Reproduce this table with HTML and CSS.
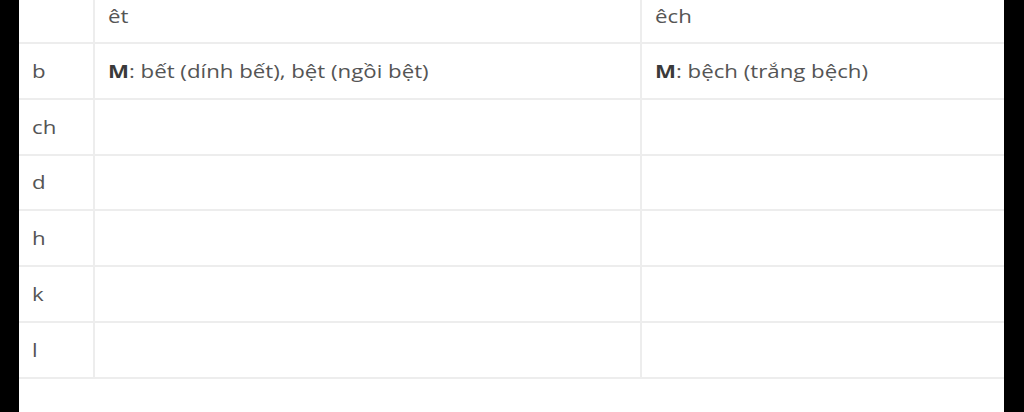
FILE: index.html
```html
<!DOCTYPE html>
<html lang="vi">
<head>
<meta charset="utf-8">
<link rel="stylesheet" href="styles.css">
</head>
<body>
<div class="sheet">
  <table class="grid">
    <colgroup><col class="c1"><col class="c2"><col class="c3"></colgroup>
    <tr class="head"><td></td><td><span class="tx">êt</span></td><td><span class="tx">êch</span></td></tr>
    <tr><td><span class="tx">b</span></td><td><span class="tx"><b>M</b>: bết (dính bết), bệt (ngồi bệt)</span></td><td><span class="tx"><b>M</b>: bệch (trắng bệch)</span></td></tr>
    <tr><td><span class="tx">ch</span></td><td></td><td></td></tr>
    <tr><td><span class="tx">d</span></td><td></td><td></td></tr>
    <tr><td><span class="tx">h</span></td><td></td><td></td></tr>
    <tr><td><span class="tx">k</span></td><td></td><td></td></tr>
    <tr><td><span class="tx">l</span></td><td></td><td></td></tr>
  </table>
</div>
</body>
</html>
```
FILE: styles.css
```css
html, body {
  margin: 0;
  padding: 0;
  background: #000;
}
.sheet {
  margin: 0 20px 0 19px;
  height: 412px;
  background: #fff;
  overflow: hidden;
}
.grid {
  width: 985px;
  border-collapse: collapse;
  table-layout: fixed;
  font-family: "Open Sans", "Noto Sans", sans-serif;
  font-size: 18px;
  color: #555;
}
.c1 { width: 75px; }
.c2 { width: 547px; }
.c3 { width: 363px; }
.grid td {
  padding: 14.9px 12px 14.9px 13px;
  line-height: 24px;
  border-bottom: 2px solid #ededed;
  border-left: 2px solid #ededed;
  vertical-align: middle;
  white-space: nowrap;
}
.grid td:first-child { border-left: none; }
.grid .head td {
  padding-top: 4px;
  padding-bottom: 14px;
}
.tx {
  display: inline-block;
  transform: scaleX(1.235);
  transform-origin: left center;
}
.grid b {
  font-weight: 700;
  color: #3a3a3a;
}
```
